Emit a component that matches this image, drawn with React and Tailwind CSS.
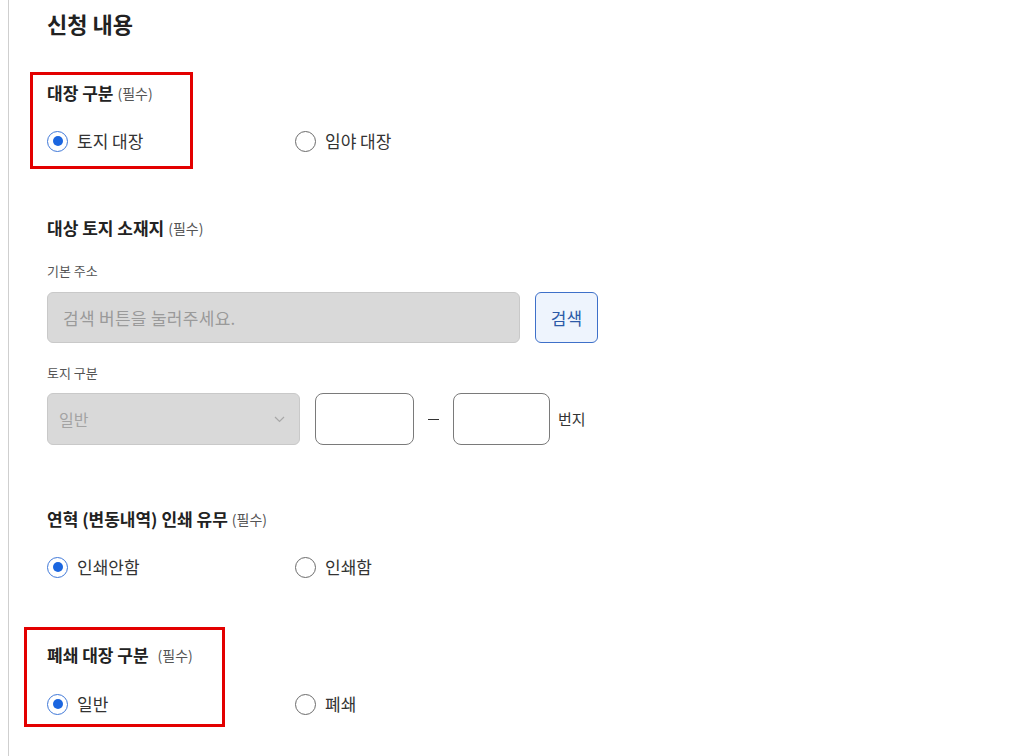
import { useState } from 'react';

const FONT = { fontFamily: '"Noto Sans CJK KR", "Noto Sans", sans-serif' };

function Radio({ checked, label, onSelect }) {
  return (
    <label className="flex h-[24px] w-[248px] cursor-pointer items-center gap-[9px]" onClick={onSelect}>
      <span
        className={
          checked
            ? 'flex h-[21px] w-[21px] items-center justify-center rounded-full border-[1.5px] border-[#3f78d8] bg-white'
            : 'flex h-[21px] w-[21px] items-center justify-center rounded-full border border-[#6b6b6b] bg-white'
        }
      >
        {checked ? <span className="h-[10px] w-[10px] rounded-full bg-[#1b66e0]" /> : null}
      </span>
      <span className="text-[17px] leading-[24px] text-[#333]">{label}</span>
    </label>
  );
}

function SectionLabel({ title, wide }) {
  return (
    <div className="flex h-[22px] items-center">
      <span className="text-[17px] font-bold leading-[22px] text-[#222]">{title}</span>
      <span className={wide ? 'ml-[9px] text-[14px] leading-[22px] text-[#555]' : 'ml-1 text-[14px] leading-[22px] text-[#555]'}>(필수)</span>
    </div>
  );
}

function RadioGroup({ options, initial }) {
  const [value, setValue] = useState(initial);
  return (
    <div className="flex h-[24px]">
      {options.map((opt) => (
        <Radio key={opt} label={opt} checked={value === opt} onSelect={() => setValue(opt)} />
      ))}
    </div>
  );
}

export default function App() {
  return (
    <div className="min-h-[756px] bg-white pl-2" style={FONT}>
      <div className="relative min-h-[756px] border-l border-[#cfcfcf] pl-[38px] pt-2">
        <h2 className="h-[30px] text-[22px] font-bold leading-[30px] text-[#222]">신청 내용</h2>

        <div className="mt-[44px]">
          <SectionLabel title="대장 구분" />
        </div>
        <div className="mt-[25px]">
          <RadioGroup options={['토지 대장', '임야 대장']} initial="토지 대장" />
        </div>

        <div className="mt-[64px]">
          <SectionLabel title="대상 토지 소재지" />
        </div>
        <p className="mt-[22px] h-[20px] text-[13px] leading-[20px] text-[#555]">기본 주소</p>
        <div className="mt-[11px] flex gap-[15px]">
          <input
            disabled
            placeholder="검색 버튼을 눌러주세요."
            className="h-[51px] w-[473px] rounded-md border border-[#c9c9c9] bg-[#d9d9d9] px-[15px] text-[17px] tracking-[0.3px] text-[#333] placeholder:text-[#9a9a9a]"
          />
          <button className="h-[51px] w-[63px] rounded-md border border-[#3e70c9] bg-[#eef4fd] text-[17px] text-[#2c5aa8]">
            검색
          </button>
        </div>

        <p className="mt-[20px] h-[20px] text-[13px] leading-[20px] text-[#555]">토지 구분</p>
        <div className="mt-[10px] flex items-center">
          <div className="flex h-[52px] w-[253px] items-center justify-between rounded-md border border-[#c9c9c9] bg-[#d9d9d9] pl-[11px] pr-[14px]">
            <span className="text-[16px] text-[#a3a3a3]">일반</span>
            <svg width="11" height="7" viewBox="0 0 11 7" fill="none">
              <path d="M1 1l4.5 4.5L10 1" stroke="#a8a8a8" strokeWidth="1.2" />
            </svg>
          </div>
          <input className="ml-[15px] h-[52px] w-[99px] rounded-lg border border-[#7a7a7a] bg-white px-2" />
          <span className="mx-[14px] h-px w-[11px] bg-[#333]" />
          <input className="h-[52px] w-[97px] rounded-lg border border-[#7a7a7a] bg-white px-2" />
          <span className="ml-2 text-[15px] text-[#333]">번지</span>
        </div>

        <div className="mt-[63px]">
          <SectionLabel title="연혁 (변동내역) 인쇄 유무" />
        </div>
        <div className="mt-[25px]">
          <RadioGroup options={['인쇄안함', '인쇄함']} initial="인쇄안함" />
        </div>

        <div className="mt-[65px]">
          <SectionLabel title="폐쇄 대장 구분" wide />
        </div>
        <div className="mt-[26px]">
          <RadioGroup options={['일반', '폐쇄']} initial="일반" />
        </div>

        <div className="pointer-events-none absolute left-[21px] top-[72px] h-[97px] w-[163px] border-[3px] border-[#e30000]" />
        <div className="pointer-events-none absolute left-[15px] top-[627px] h-[100px] w-[201px] border-[3px] border-[#e30000]" />
      </div>
    </div>
  );
}
